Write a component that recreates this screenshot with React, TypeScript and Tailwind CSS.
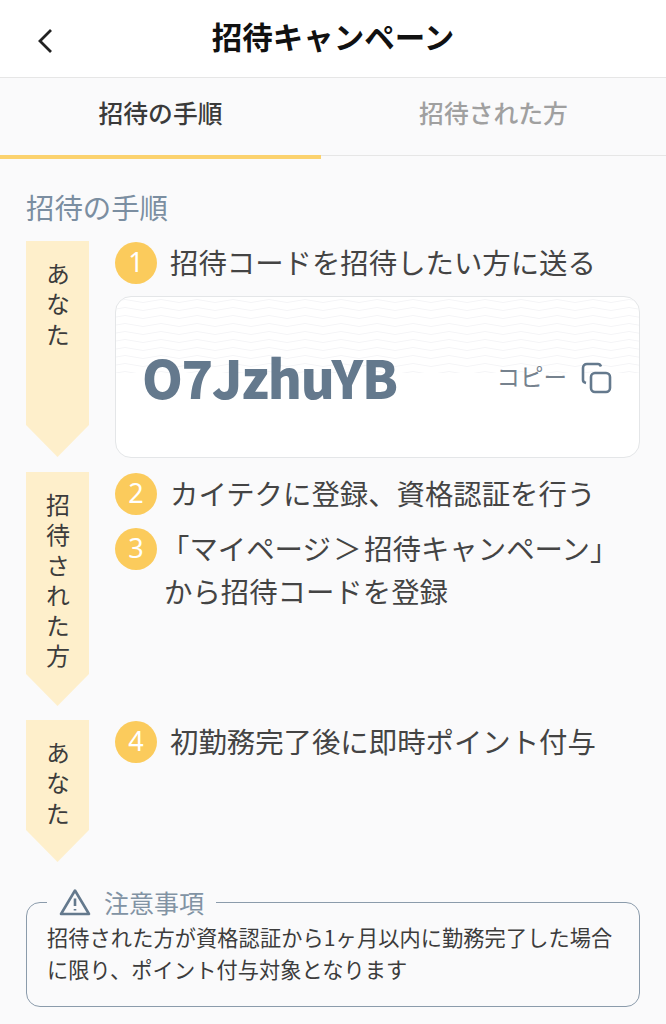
import type { ReactNode } from "react";

const jp = "font-['Noto_Sans_CJK_JP','Noto_Sans',sans-serif]";

function Ribbon({ label, height }: { label: string; height: string }) {
  return (
    <div className={`flex w-[63px] shrink-0 justify-center bg-[#feefcb] pt-[21px] [clip-path:polygon(0_0,100%_0,100%_calc(100%-32px),50%_100%,0_calc(100%-32px))] ${height}`}>
      <span className="text-[24px] leading-[30px] tracking-[6.200px] text-[#3c3c3c] [writing-mode:vertical-rl]">{label}</span>
    </div>
  );
}

function Step({ n, children }: { n: number; children: ReactNode }) {
  return (
    <div className="flex h-[43px] items-center gap-[13px]">
      <span className="flex size-[42px] shrink-0 items-center justify-center rounded-full bg-[#fbcb5c] font-['Noto_Sans',sans-serif] text-[27px] font-normal text-white">
        {n}
      </span>
      <span className="mb-[2px] whitespace-nowrap text-[28.400px] leading-[40px] text-[#444444]">{children}</span>
    </div>
  );
}

function Waves() {
  return (
    <svg className="absolute inset-x-0 top-0 h-[76px] w-full" aria-hidden="true">
      <defs>
        <pattern id="wave" width="36" height="8" patternUnits="userSpaceOnUse">
          <path d="M0 4 Q9 1 18 4 T36 4" fill="none" stroke="#f4f5f7" strokeWidth="1" />
        </pattern>
      </defs>
      <rect width="100%" height="100%" fill="url(#wave)" />
    </svg>
  );
}

export default function App() {
  return (
    <div className={`h-[1024px] w-[666px] overflow-hidden bg-[#fafafb] ${jp}`}>
      <header className="relative flex h-[78px] items-center justify-center border-b border-[#e6e6e6] bg-white">
        <svg className="absolute left-[36px] top-[28px]" width="20" height="26" viewBox="0 0 20 26" fill="none" stroke="#222222" strokeWidth="2.800">
          <path d="M15 2 L4 13 L15 24" />
        </svg>
        <h1 className="mb-[4px] text-[30.500px] font-bold leading-none text-[#111111]">招待キャンペーン</h1>
      </header>

      <nav className="flex h-[78px] border-b border-[#e6e6e6] text-[24.800px] font-medium">
        <div className="flex h-[81px] w-[321px] shrink-0 items-center justify-center border-b-[4px] border-[#fbd26e] pb-[7px] text-[#3a3a3a]">招待の手順</div>
        <div className="flex flex-1 items-center justify-center pb-[8px] text-[#a0a0a0]">招待された方</div>
      </nav>

      <main className="px-[26px] pt-[31px]">
        <h2 className="text-[28.400px] leading-[40px] text-[#7b8ea1]">招待の手順</h2>

        <div className="mt-[14px] flex flex-col gap-[14px]">
          <section className="flex gap-[26px]">
            <Ribbon label="あなた" height="h-[216px]" />
            <div className="flex-1">
              <Step n={1}>招待コードを招待したい方に送る</Step>
              <div className="relative mt-[12px] flex h-[162px] items-start justify-between overflow-hidden rounded-[16px] border border-[#e4e6e8] bg-white pl-[26px] pr-[26px] pt-[48px]">
                <Waves />
                <span className="relative mt-[-3px] text-[52px] font-black leading-[70px] tracking-[-1.250px] text-[#64798d]">O7JzhuYB</span>
                <div className="relative mt-[10px] flex items-start gap-[14px]">
                  <span className="mt-[1px] text-[23.500px] leading-[40px] text-[#76828e]">コピー</span>
                  <svg className="mt-[7px]" width="32" height="32" viewBox="0 0 32 32" fill="none" stroke="#64798d" strokeWidth="2.600" strokeLinejoin="round">
                    <rect x="10" y="11" width="19" height="19" rx="4" />
                    <path d="M5 21 C3 20.500 2 19.500 2 18 V6 C2 3.500 3.500 2 6 2 H17 C18.500 2 19.500 3 20 4.500" />
                  </svg>
                </div>
              </div>
            </div>
          </section>

          <section className="flex gap-[26px]">
            <Ribbon label="招待された方" height="h-[234px]" />
            <div className="flex-1">
              <Step n={2}>カイテクに登録、資格認証を行う</Step>
              <div className="mt-[12px]">
                <Step n={3}>
                  <span className="ml-[-9px]">「マイページ<span className="mx-[2.500px]">＞</span>招待キャンペーン」</span>
                </Step>
              </div>
              <p className="ml-[49px] mt-[-1px] text-[28.400px] leading-[44px] text-[#444444]">から招待コードを登録</p>
            </div>
          </section>

          <section className="flex gap-[26px]">
            <Ribbon label="あなた" height="h-[142px]" />
            <div className="flex-1">
              <Step n={4}>初勤務完了後に即時ポイント付与</Step>
            </div>
          </section>
        </div>

        <fieldset className="mt-[25px] h-[120px] w-[614px] rounded-[14px] border-[1.500px] border-[#8b9bab] pl-[20px] pr-[4px]">
          <legend className="flex items-center gap-[13px] pl-[12px] pr-[12px] text-[25px] leading-[30px] text-[#8293a4]">
            <svg width="32" height="28" viewBox="0 0 32 28" fill="none" stroke="#64798d" strokeWidth="2.600" strokeLinejoin="round">
              <path d="M16 2.500 L30 26 H2 Z" />
              <path d="M16 10.500 V18" />
              <path d="M16 21 V22.500" />
            </svg>
            <span>注意事項</span>
          </legend>
          <p className="mt-[4px] whitespace-nowrap text-[21.200px] leading-[32px] tracking-[0.100px] text-[#3c3c3c]">
            招待された方が資格認証から1ヶ月以内に勤務完了した場合
            <br />
            に限り、ポイント付与対象となります
          </p>
        </fieldset>
      </main>
    </div>
  );
}
